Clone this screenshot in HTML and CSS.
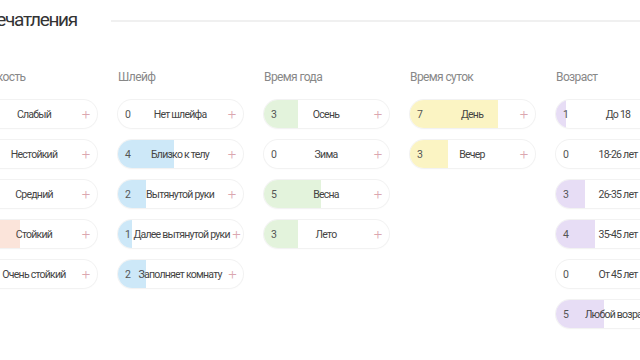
FILE: index.html
```html
<!DOCTYPE html>
<html lang="ru">
  <head>
    <meta charset="UTF-8" />
    <meta name="viewport" content="width=device-width, initial-scale=1.0" />
    <title>Впечатления</title>
    <link rel="stylesheet" href="styles.css">
  </head>
  <body>
    <div class="impressions">
      <div class="section-head">
        <h2 class="section-title">Впечатления</h2>
        <div class="section-line"></div>
      </div>

      <div class="groups">
        <div class="group group-peach">
          <div class="group-title">Стойкость</div>
          <div class="vote"><div class="vote-fill" style="width: 15.4%"></div><span class="vote-count">2</span><span class="vote-label">Слабый</span><span class="vote-plus">+</span></div>
          <div class="vote"><div class="vote-fill" style="width: 15.4%"></div><span class="vote-count">2</span><span class="vote-label">Нестойкий</span><span class="vote-plus">+</span></div>
          <div class="vote"><div class="vote-fill" style="width: 15.4%"></div><span class="vote-count">2</span><span class="vote-label">Средний</span><span class="vote-plus">+</span></div>
          <div class="vote"><div class="vote-fill" style="width: 38.5%"></div><span class="vote-count">5</span><span class="vote-label">Стойкий</span><span class="vote-plus">+</span></div>
          <div class="vote"><div class="vote-fill" style="width: 15.4%"></div><span class="vote-count">2</span><span class="vote-label">Очень стойкий</span><span class="vote-plus">+</span></div>
        </div>

        <div class="group group-blue">
          <div class="group-title">Шлейф</div>
          <div class="vote"><div class="vote-fill" style="width: 0%"></div><span class="vote-count">0</span><span class="vote-label">Нет шлейфа</span><span class="vote-plus">+</span></div>
          <div class="vote"><div class="vote-fill" style="width: 44.4%"></div><span class="vote-count">4</span><span class="vote-label">Близко к телу</span><span class="vote-plus">+</span></div>
          <div class="vote"><div class="vote-fill" style="width: 22.2%"></div><span class="vote-count">2</span><span class="vote-label">Вытянутой руки</span><span class="vote-plus">+</span></div>
          <div class="vote"><div class="vote-fill" style="width: 11.1%"></div><span class="vote-count">1</span><span class="vote-label">Далее вытянутой руки</span><span class="vote-plus">+</span></div>
          <div class="vote"><div class="vote-fill" style="width: 22.2%"></div><span class="vote-count">2</span><span class="vote-label">Заполняет комнату</span><span class="vote-plus">+</span></div>
        </div>

        <div class="group group-green">
          <div class="group-title">Время года</div>
          <div class="vote"><div class="vote-fill" style="width: 27.3%"></div><span class="vote-count">3</span><span class="vote-label">Осень</span><span class="vote-plus">+</span></div>
          <div class="vote"><div class="vote-fill" style="width: 0%"></div><span class="vote-count">0</span><span class="vote-label">Зима</span><span class="vote-plus">+</span></div>
          <div class="vote"><div class="vote-fill" style="width: 45.5%"></div><span class="vote-count">5</span><span class="vote-label">Весна</span><span class="vote-plus">+</span></div>
          <div class="vote"><div class="vote-fill" style="width: 27.3%"></div><span class="vote-count">3</span><span class="vote-label">Лето</span><span class="vote-plus">+</span></div>
        </div>

        <div class="group group-yellow">
          <div class="group-title">Время суток</div>
          <div class="vote"><div class="vote-fill" style="width: 70%"></div><span class="vote-count">7</span><span class="vote-label">День</span><span class="vote-plus">+</span></div>
          <div class="vote"><div class="vote-fill" style="width: 30%"></div><span class="vote-count">3</span><span class="vote-label">Вечер</span><span class="vote-plus">+</span></div>
        </div>

        <div class="group group-violet">
          <div class="group-title">Возраст</div>
          <div class="vote"><div class="vote-fill" style="width: 7.7%"></div><span class="vote-count">1</span><span class="vote-label">До 18</span><span class="vote-plus">+</span></div>
          <div class="vote"><div class="vote-fill" style="width: 0%"></div><span class="vote-count">0</span><span class="vote-label">18-26 лет</span><span class="vote-plus">+</span></div>
          <div class="vote"><div class="vote-fill" style="width: 23.1%"></div><span class="vote-count">3</span><span class="vote-label">26-35 лет</span><span class="vote-plus">+</span></div>
          <div class="vote"><div class="vote-fill" style="width: 30.8%"></div><span class="vote-count">4</span><span class="vote-label">35-45 лет</span><span class="vote-plus">+</span></div>
          <div class="vote"><div class="vote-fill" style="width: 0%"></div><span class="vote-count">0</span><span class="vote-label">От 45 лет</span><span class="vote-plus">+</span></div>
          <div class="vote"><div class="vote-fill" style="width: 38.5%"></div><span class="vote-count">5</span><span class="vote-label">Любой возраст</span><span class="vote-plus">+</span></div>
        </div>
      </div>
    </div>
  </body>
</html>
```

FILE: styles.css
```css
html,
body {
  margin: 0;
  background-color: #fff;
  color: #333;
  font-family: Roboto, "Noto Sans", sans-serif;
  width: 640px;
  height: 360px;
  overflow: hidden;
}
.impressions {
  margin-left: -28px;
  width: 760px;
}
.section-head {
  display: flex;
  align-items: center;
  height: 40px;
}
.section-title {
  margin: 0;
  padding-left: 4px;
  font-size: 19px;
  font-weight: 400;
  letter-spacing: -1.3px;
  color: #333;
  line-height: 40px;
}
.section-line {
  flex: 1;
  height: 2px;
  margin-left: 34px;
  margin-top: 1px;
  background-color: #f0f0f0;
}
.groups {
  display: grid;
  grid-template-columns: repeat(5, 125px);
  column-gap: 21px;
  padding-top: 27px;
}
.group {
  display: flex;
  flex-direction: column;
  gap: 12px;
}
.group-title {
  font-size: 12px;
  letter-spacing: -0.6px;
  color: #888;
  height: 20px;
  line-height: 20px;
  margin-bottom: 1px;
}
.vote {
  position: relative;
  display: flex;
  align-items: center;
  height: 28px;
  border-radius: 14px;
  overflow: hidden;
  background-color: #fff;
  box-shadow: 0 0 0 1px #f2f2f2, 0 1px 2px rgba(0, 0, 0, 0.04);
  font-size: 10.5px;
  letter-spacing: -0.75px;
  color: #444;
}
.vote-fill {
  position: absolute;
  left: 0;
  top: 0;
  bottom: 0;
}
.vote-count {
  position: relative;
  width: 14px;
  padding-left: 7px;
  color: #555;
}
.vote-label {
  position: relative;
  flex: 1;
  text-align: center;
  white-space: nowrap;
}
.vote-plus {
  position: relative;
  width: 22px;
  text-align: center;
  font-size: 15px;
  font-weight: 300;
  letter-spacing: 0;
  color: #dba7b0;
}
.group-peach .vote-fill {
  background-color: #fbe4da;
}
.group-blue .vote-fill {
  background-color: #cde8f8;
}
.group-green .vote-fill {
  background-color: #e3f3dc;
}
.group-yellow .vote-fill {
  background-color: #fbf4c3;
}
.group-violet .vote-fill {
  background-color: #e7ddf5;
}
```
